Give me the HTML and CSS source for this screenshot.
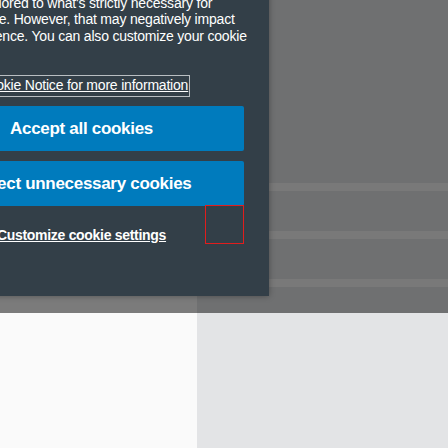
FILE: index.html
```html
<!DOCTYPE html>
<html lang="en">
<head>
<meta charset="utf-8">
<title>Cookie banner</title>
<link rel="stylesheet" href="styles.css">
</head>
<body>
<div class="page">
  <aside class="sidebar"></aside>
  <main class="main">
    <div class="row"></div>
    <div class="row"></div>
    <div class="row"></div>
  </main>
</div>
<div class="overlay"></div>
<div class="banner" role="dialog" aria-label="Cookie consent">
  <p class="banner-text">You can reject unnecessary cookies so<br>that use is tailored to what's strictly necessary for<br>use of our Site. However, that may negatively impact<br>visitor experience. You can also customize your cookie<br>settings.</p>
  <p class="notice">Read our <a class="notice-link" href="#">Cookie Notice for more information</a></p>
  <div class="actions">
    <button class="btn" type="button">Accept all cookies</button>
    <button class="btn" type="button">Reject unnecessary cookies</button>
  </div>
  <div class="customize-row">
    <a class="customize" href="#">Customize cookie settings</a>
    <span class="focus-box"></span>
  </div>
</div>
</body>
</html>
```
FILE: styles.css
```css
html, body {
  margin: 0;
  padding: 0;
}
body {
  position: relative;
  height: 448px;
  overflow: hidden;
  font-family: "Liberation Sans", Arial, sans-serif;
}
.page {
  display: grid;
  grid-template-columns: 197px 1fr;
  height: 448px;
}
.sidebar {
  background: #fafafa;
}
.main {
  background: #e3e4e6;
  padding-top: 183px;
  display: flex;
  flex-direction: column;
}
.row {
  height: 40px;
  border-top: 8px solid #f7f7f7;
}
.overlay {
  position: absolute;
  left: 0;
  top: 0;
  right: 0;
  height: 313px;
  background: rgba(0, 0, 0, 0.51);
}
.banner {
  position: absolute;
  left: -106px;
  top: -22px;
  width: 325px;
  padding: 0 25px 52px;
  background: #333f48;
  color: #fff;
  box-shadow: 0 0 6px rgba(0, 0, 0, 0.35);
}
.banner-text,
.notice {
  margin: 0;
  font-size: 14px;
  line-height: 16.5px;
  letter-spacing: -0.2px;
  white-space: nowrap;
}
.banner-text {
  margin-bottom: 16.5px;
}
.notice-link {
  color: #fff;
  text-decoration: underline;
  outline: 1px solid #b9bec2;
  outline-offset: 1px;
  padding-bottom: 2px;
}
.actions {
  display: flex;
  flex-direction: column;
  gap: 10px;
  margin-top: 12.5px;
}
.btn {
  display: block;
  width: 100%;
  height: 45px;
  border: 0;
  border-radius: 2px;
  background: #007bbd;
  color: #fff;
  font-family: "Liberation Sans", Arial, sans-serif;
  font-weight: bold;
  font-size: 17px;
  letter-spacing: -0.3px;
  white-space: nowrap;
  padding: 0;
}
.customize-row {
  position: relative;
  height: 38px;
  text-align: center;
}
.customize {
  display: inline-block;
  margin-top: 21px;
  font-size: 14px;
  line-height: 16.5px;
  font-weight: bold;
  letter-spacing: -0.3px;
  color: #fff;
  text-decoration: underline;
  white-space: nowrap;
}
.focus-box {
  position: absolute;
  right: 0;
  top: -1px;
  width: 37px;
  height: 37px;
  border: 1px solid #e11d1d;
}
```
